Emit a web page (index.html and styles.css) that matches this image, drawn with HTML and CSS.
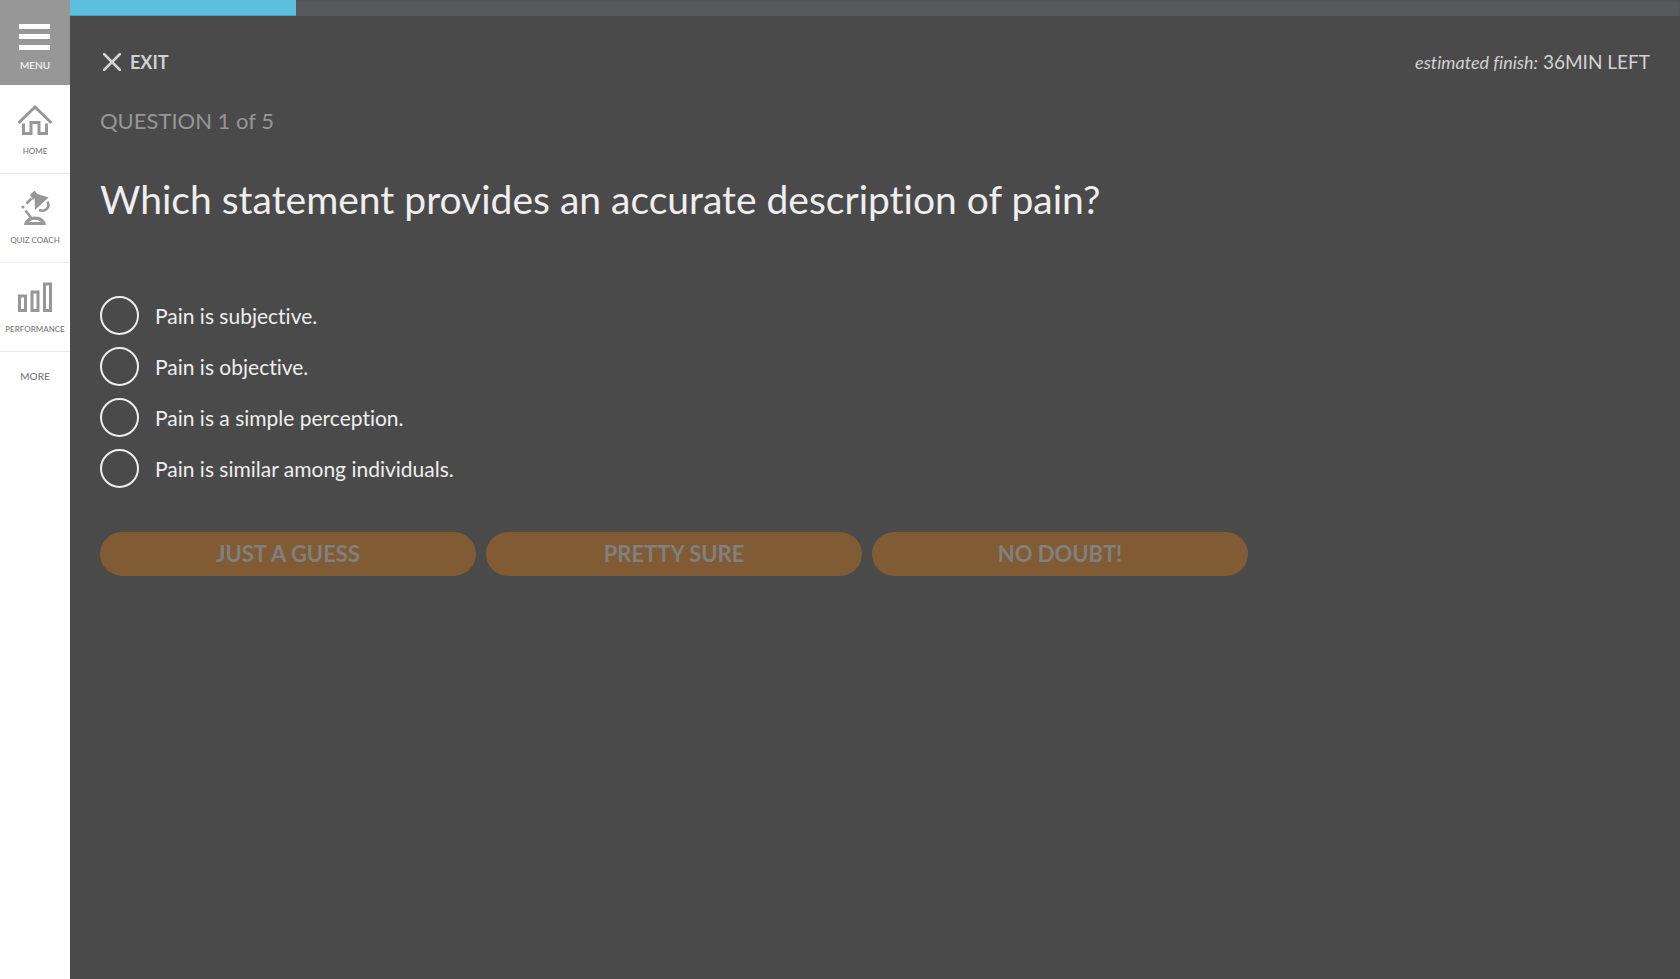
FILE: index.html
```html
<!DOCTYPE html>
<html lang="en">
<head>
<meta charset="utf-8">
<title>Quiz</title>
<link rel="stylesheet" href="styles.css">
</head>
<body>
<div class="app">
  <nav class="sidebar" aria-label="Main">
    <button class="menu" type="button">
      <svg width="32" height="26" viewBox="0 0 32 26" aria-hidden="true"><path fill="#fff" d="M0 0h31v5H0zM0 10h31v5H0zM0 21h31v5H0z"/></svg>
      <span>MENU</span>
    </button>
    <a class="nav-item" href="#home">
      <svg width="36" height="36" viewBox="0 0 36 36" aria-hidden="true" fill="none" stroke="#979797" stroke-width="3"><path d="M1.500 22 18 6l16.500 16"/><path d="M6.500 22.500v10h7.500v-11h8v11h7.500v-10"/></svg>
      <span>HOME</span>
    </a>
    <a class="nav-item" href="#quiz-coach">
      <svg width="36" height="36" viewBox="0 0 36 36" aria-hidden="true"><g fill="#979797"><path d="m13 5 4.500-4.500L21 5l-5 5z"/><path d="m17.500 5.500 3-1.500 11 3.500L18 20z"/><circle cx="6" cy="17" r="1.600"/><path fill-rule="evenodd" d="M7 35c1-5.500 5-8.500 11-8.500s10 3 11 8.500zm5-3h12c-3-3-9-3-12 0z"/></g><g fill="none" stroke="#979797" stroke-width="2.500"><path d="m14.500 8.500-5 5M8.500 20.500l5.500 7M30.500 11.500c3 6-2 11-8.500 8.500"/></g></svg>
      <span>QUIZ COACH</span>
    </a>
    <a class="nav-item" href="#performance">
      <svg width="36" height="36" viewBox="0 0 36 36" aria-hidden="true" fill="none" stroke="#979797" stroke-width="3"><path d="M2.500 17h6v14.500h-6zM15 13h6v18.500h-6zM27.500 5h6v26.500h-6z"/></svg>
      <span>PERFORMANCE</span>
    </a>
    <a class="more" href="#more">MORE</a>
  </nav>
  <main class="main">
    <div class="progress" role="progressbar" aria-label="Quiz progress" aria-valuenow="14" aria-valuemin="0" aria-valuemax="100"><div class="progress-bar" style="width:14.05%"></div></div>
    <div class="content">
      <header class="topbar">
        <button class="exit" type="button">
          <svg width="18" height="18" viewBox="0 0 18 18" aria-hidden="true"><path d="m1 1 16 16M17 1 1 17" stroke="#d2d2d2" stroke-width="2.600" stroke-linecap="round"/></svg>
          <span>EXIT</span>
        </button>
        <p class="estimate"><em>estimated finish:</em> 36MIN LEFT</p>
      </header>
      <p class="counter">QUESTION 1 of 5</p>
      <h1 class="question" id="question">Which statement provides an accurate description of pain?</h1>
      <div class="options" role="radiogroup" aria-labelledby="question">
        <label class="option"><input type="radio" name="answer"><span>Pain is subjective.</span></label>
        <label class="option"><input type="radio" name="answer"><span>Pain is objective.</span></label>
        <label class="option"><input type="radio" name="answer"><span>Pain is a simple perception.</span></label>
        <label class="option"><input type="radio" name="answer"><span>Pain is similar among individuals.</span></label>
      </div>
      <div class="actions">
        <button class="action" type="button" disabled>JUST A GUESS</button>
        <button class="action" type="button" disabled>PRETTY SURE</button>
        <button class="action" type="button" disabled>NO DOUBT!</button>
      </div>
    </div>
  </main>
</div>
</body>
</html>
```
FILE: styles.css
```css
* { box-sizing: border-box; }
body { margin: 0; font-family: Lato, "Open Sans", sans-serif; font-variant-ligatures: none; background: #4a4a4a; color: #eee; }
button { border: 0; padding: 0; background: none; font-family: inherit; color: inherit; }
svg { display: block; }
p, h1 { margin: 0; font-weight: 400; }
.app { display: flex; min-height: 100vh; }

.sidebar { flex: none; width: 70px; background: #fff; display: flex; flex-direction: column; }
.menu { height: 85px; background: #979797; color: #fff; display: flex; flex-direction: column; align-items: center; padding-top: 24px; gap: 9px; font-size: 10px; line-height: 12px; }
.nav-item { height: 89px; padding-top: 16px; display: flex; flex-direction: column; align-items: center; gap: 9px; border-bottom: 1px solid #e9e9e9; color: #777; text-decoration: none; font-size: 8px; line-height: 10px; font-weight: 500; }
.more { padding-top: 17px; color: #777; text-decoration: none; font-size: 10px; line-height: 14px; font-weight: 500; text-align: center; }

.main { flex: 1; min-width: 0; }
.progress { height: 16px; background: #58595b; box-shadow: inset 0 1px 2px rgba(0, 0, 0, .1); }
.progress-bar { height: 100%; background: #5bc0de; box-shadow: inset 0 -1px 0 rgba(0, 0, 0, .15); }
.content { padding: 34px 30px; }
.topbar { display: flex; justify-content: space-between; align-items: center; height: 24px; color: #d2d2d2; }
.exit { display: flex; align-items: center; gap: 9px; padding-left: 3px; font-size: 18px; line-height: 24px; font-weight: 700; }
.estimate { font-size: 19px; line-height: 24px; }
.estimate em { font-size: 18px; }
.counter { margin-top: 33px; font-size: 22px; line-height: 28px; color: #979797; }
.question { margin-top: 40px; font-size: 39px; line-height: 48px; }
.options { margin-top: 73px; display: flex; flex-direction: column; gap: 12px; }
.option { display: flex; align-items: center; gap: 16px; font-size: 21px; line-height: 24px; }
.option input { appearance: none; margin: 0; width: 39px; height: 39px; border: 2px solid #eee; border-radius: 50%; }
.option input:checked { background: #5bc0de; }
.actions { margin-top: 44px; max-width: 1148px; display: grid; grid-template-columns: repeat(3, 1fr); gap: 10px; }
.action { height: 44px; border-radius: 22px; background: #815b33; color: #808080; font-size: 22px; line-height: 28px; font-weight: 700; }
```
